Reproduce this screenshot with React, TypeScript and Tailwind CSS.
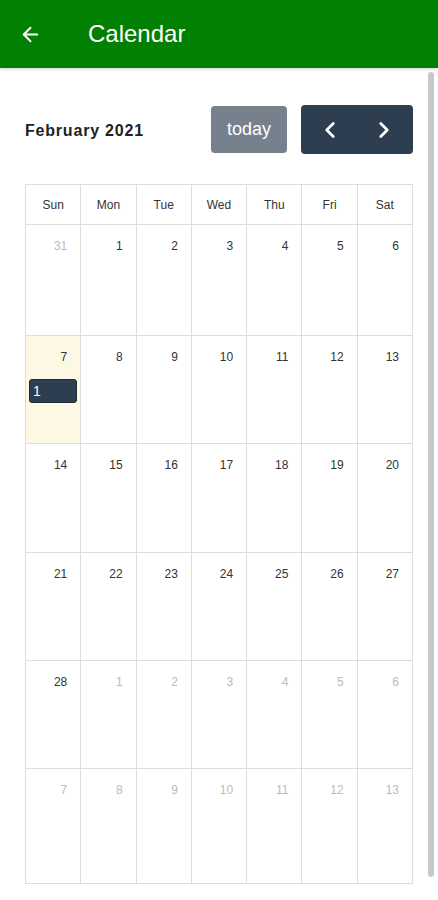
import { ArrowLeft, ChevronLeft, ChevronRight } from "lucide-react";

const dayNames = ["Sun", "Mon", "Tue", "Wed", "Thu", "Fri", "Sat"];

const rowHeights = ["h-[111px]", "h-[108px]", "h-[109px]", "h-[108px]", "h-[108px]", "h-[115px]"];

const weeks = [
  [31, 1, 2, 3, 4, 5, 6],
  [7, 8, 9, 10, 11, 12, 13],
  [14, 15, 16, 17, 18, 19, 20],
  [21, 22, 23, 24, 25, 26, 27],
  [28, 1, 2, 3, 4, 5, 6],
  [7, 8, 9, 10, 11, 12, 13],
];

const isOther = (w: number, d: number) => (w === 0 && d === 0) || (w === 4 && d > 0) || w === 5;

const App = () => {
  return (
    <div
      className="w-[438px] h-[900px] flex flex-col bg-white overflow-hidden"
      style={{ fontFamily: '"Liberation Sans", Arial, sans-serif' }}
    >
      <header className="h-[68px] bg-[#018001] flex items-center pl-[19px] shadow-[0_1px_3px_rgba(0,0,0,0.2)] relative z-10">
        <ArrowLeft className="w-[23px] h-[23px] text-white" strokeWidth={2} />
        <h1 className="ml-[46px] text-white text-[24px] leading-none">Calendar</h1>
      </header>

      <main className="relative flex-1">
        <div className="pl-[25px] pr-[25px] pt-[37px]">
          <div className="flex items-center">
            <h2 className="text-[16px] font-bold text-[#222] tracking-[0.8px] mt-[2px]">February 2021</h2>
            <button className="ml-auto w-[76px] h-[47px] rounded-[4px] bg-[#76818d] text-white text-[18px] leading-none pb-[2px]">
              today
            </button>
            <div className="ml-[14px] w-[112px] h-[49px] rounded-[4px] bg-[#2c3e50] flex items-center justify-between px-[16px]">
              <ChevronLeft className="w-[26px] h-[26px] text-white" strokeWidth={2.5} />
              <ChevronRight className="w-[26px] h-[26px] text-white" strokeWidth={2.5} />
            </div>
          </div>

          <div className="mt-[30px] w-[388px] border-l border-t border-[#ddd]">
            <div className="grid grid-cols-7">
              {dayNames.map((n) => (
                <div
                  key={n}
                  className="h-[40px] border-r border-b border-[#ddd] flex items-center justify-center text-[12px] text-[#333]"
                >
                  {n}
                </div>
              ))}
            </div>
            {weeks.map((week, w) => (
              <div key={w} className={`grid grid-cols-7 ${rowHeights[w]}`}>
                {week.map((day, d) => (
                  <div
                    key={d}
                    className={`border-r border-b border-[#ddd] flex flex-col ${
                      w === 1 && d === 0 ? "bg-[#fcf8e3]" : ""
                    }`}
                  >
                    <div
                      className={`pt-[13px] pr-[13px] text-right text-[12px] leading-[16px] ${
                        isOther(w, d) ? "text-[#bbb]" : "text-[#333]"
                      }`}
                    >
                      {day}
                    </div>
                    {w === 1 && d === 0 && (
                      <div className="mt-[14px] mx-[3px] h-[24px] rounded-[3px] bg-[#2c3e50] border border-[#1e2b37] text-white text-[14px] leading-[22px] pl-[3px]">
                        1
                      </div>
                    )}
                  </div>
                ))}
              </div>
            ))}
          </div>
        </div>

        <div className="absolute right-[4px] top-[4px] w-[6px] h-[805px] rounded-full bg-[#c8c8c8]" />
      </main>
    </div>
  );
};

export default App;
